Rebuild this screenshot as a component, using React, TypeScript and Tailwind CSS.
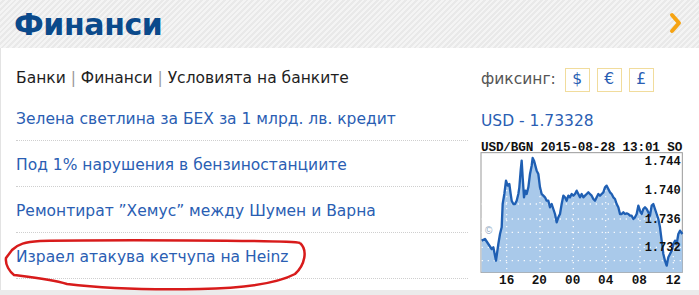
import React from "react";

const news = [
  "Зелена светлина за БЕХ за 1 млрд. лв. кредит",
  "Под 1% нарушения в бензиностанциите",
  "Ремонтират ”Хемус” между Шумен и Варна",
  "Израел атакува кетчупа на Heinz",
];

// chart points, in the chart's own coordinates
const pts: [number, number][] = [
  [65, 320], [75, 315], [85, 330], [95, 345], [100, 340], [108, 380], [115, 330], [120, 300],
  [125, 280], [128, 210], [133, 180], [138, 140], [143, 155], [148, 150], [152, 180], [155, 200],
  [160, 210], [165, 210], [170, 200], [175, 180], [178, 160], [182, 110], [185, 80], [188, 130],
  [192, 190], [196, 170], [200, 180], [205, 160], [210, 120], [215, 95], [218, 72], [222, 80],
  [226, 95], [230, 110], [235, 120], [240, 160], [245, 180], [250, 185], [255, 190], [260, 200],
  [265, 200], [270, 220], [275, 210], [280, 225], [285, 240], [290, 265], [295, 250], [300, 240],
  [305, 210], [310, 185], [315, 190], [320, 200], [325, 185], [330, 190], [335, 180], [340, 185],
  [345, 180], [350, 170], [355, 180], [360, 190], [365, 180], [370, 190], [375, 185], [380, 180],
  [385, 175], [390, 180], [395, 185], [400, 195], [405, 200], [410, 190], [415, 180], [420, 185],
  [425, 180], [430, 175], [435, 160], [440, 155], [445, 165], [450, 175], [455, 180], [460, 190],
  [465, 195], [470, 210], [475, 220], [480, 240], [485, 240], [490, 235], [495, 240], [500, 238],
  [505, 240], [510, 245], [515, 245], [520, 255], [525, 250], [530, 240], [535, 215], [540, 230],
  [545, 240], [550, 225], [555, 220], [560, 225], [565, 235], [570, 245], [575, 215], [580, 210],
  [585, 225], [590, 240], [595, 255], [600, 280], [605, 320], [610, 360], [615, 380], [620, 395],
  [625, 370], [630, 360], [635, 350], [640, 330], [645, 320], [650, 330], [655, 300], [660, 290],
  [667, 300],
];

function Chart() {
  const line = pts.map(([x, y]) => `${x},${y}`).join(" ");
  const area = `65,415 ${line} 667,415`;
  const mono = { fontFamily: '"Liberation Mono", monospace', fontWeight: 700 };
  return (
    <svg width="210" height="150" viewBox="54 9 630 450">
      <text x="63" y="50" fontSize="38" fill="#111" style={mono} textLength="604">
        USD/BGN 2015-08-28 13:01 SO
      </text>
      <rect x="63" y="56" width="604" height="359" fill="#fff" stroke="#9a9a9a" strokeWidth="3" />
      <polygon points={area} fill="#a9c9ea" />
      {[210, 255, 295, 340, 380].map((y) => (
        <line key={y} x1="65" x2="665" y1={y} y2={y} stroke="#fff" strokeWidth="4" strokeDasharray="4 14" opacity="0.9" />
      ))}
      {[140, 240, 340, 437, 540, 640].map((x) => (
        <line key={x} x1={x} x2={x} y1="60" y2="413" stroke="#fff" strokeWidth="4" strokeDasharray="4 14" opacity="0.9" />
      ))}
      <polyline points={line} fill="none" stroke="#1f5fb3" strokeWidth="7" strokeLinejoin="round" />
      <text x="75" y="300" fontSize="30" fill="#8fa6c0" style={{ fontFamily: '"Liberation Sans", sans-serif' }}>©</text>
      {[
        ["1.744", 92],
        ["1.740", 181],
        ["1.736", 268],
        ["1.732", 351],
      ].map(([t, y]) => (
        <text key={t} x="662" y={y} fontSize="36" fill="#111" textAnchor="end" style={mono}>
          {t}
        </text>
      ))}
      {[
        ["16", 140],
        ["20", 238],
        ["00", 338],
        ["04", 437],
        ["08", 538],
        ["12", 640],
      ].map(([t, x]) => (
        <text key={t} x={x} y="450" fontSize="38" fill="#111" textAnchor="middle" style={mono}>
          {t}
        </text>
      ))}
    </svg>
  );
}

export default function App() {
  return (
    <div className="w-[699px] h-[295px] overflow-hidden bg-[#ebebeb] relative" style={{ fontFamily: '"DejaVu Sans", Verdana, sans-serif' }}>
      <div className="h-[48px] flex items-center justify-between pl-[14px] pr-[16px] bg-[repeating-linear-gradient(135deg,#f4f4f4_0px,#f4f4f4_2px,#e9e9e9_2px,#e9e9e9_4px)]">
        <h1 className="text-[30px] font-bold text-[#0b4a8b] tracking-[-0.4px] leading-none mt-[2px]">Финанси</h1>
        <svg width="14" height="22" viewBox="0 0 14 22" className="mt-[-2px]">
          <polyline points="3,3 10,11 3,19" fill="none" stroke="#f5a313" strokeWidth="4" strokeLinecap="round" strokeLinejoin="round" />
        </svg>
      </div>

      <div className="h-[242px] bg-white border-l border-[#e3e3e3] flex">
        <div className="w-[467px] pl-[15px]">
          <div className="h-[47px] pt-[20px] text-[15.5px] leading-[20px] text-[#1e1e1e]">
            Банки <span className="text-[#9a9a9a]">|</span> Финанси <span className="text-[#9a9a9a]">|</span> Условията на банките
          </div>
          {news.map((n) => (
            <div key={n} className="h-[46px] pt-[5px] flex items-center border-b border-dotted border-[#cfcfcf] text-[15.5px] text-[#2a5eb3]">
              {n}
            </div>
          ))}
        </div>

        <div className="pl-[13px] flex flex-col">
          <div className="flex items-center pt-[19px] h-[44px]">
            <span className="text-[15.5px] text-[#555] mr-[9px]">фиксинг:</span>
            <div className="flex gap-[7px]">
              {["$", "€", "£"].map((c) => (
                <div key={c} className="w-[25px] h-[24px] border border-[#f1dc9c] flex items-center justify-center text-[15.5px] text-[#2a5eb3]">
                  {c}
                </div>
              ))}
            </div>
          </div>
          <div className="mt-[19px] text-[15.5px] leading-[20px] text-[#2a5eb3]">USD - 1.73328</div>
          <div className="mt-[6px] -ml-[3px]">
            <Chart />
          </div>
        </div>
      </div>

      <svg className="absolute left-0 top-0 pointer-events-none" width="699" height="295">
        <path
          d="M300 243 C290 240 100 240 40 241 C25 242 18 244 12 250 L6 258 C5 265 10 272 14 275 C30 277 50 279 67 284 C100 288 150 290 200 289 C250 288 280 282 295 274 C305 265 308 250 300 243"
          fill="none"
          stroke="#d81b1b"
          strokeWidth="2.5"
        />
      </svg>
    </div>
  );
}
